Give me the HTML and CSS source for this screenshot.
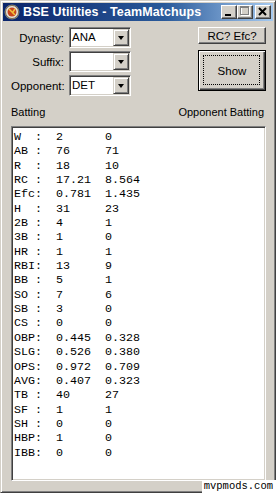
FILE: index.html
```html
<!DOCTYPE html>
<html lang="en">
<head>
    <meta charset="UTF-8">
    <meta name="viewport" content="width=device-width, initial-scale=1.0">
    <title>BSE Utilities - TeamMatchups</title>
    <link rel="stylesheet" href="styles.css">
</head>
<body>
    <div class="window">
        <div class="titlebar">
            <svg class="app-icon" width="16" height="16" viewBox="0 0 16 16">
                <circle cx="8" cy="8" r="7.5" fill="#8a8a8a"/>
                <circle cx="8" cy="8" r="6.5" fill="#e8e4dc"/>
                <circle cx="8" cy="8" r="4.5" fill="#c8461e"/>
                <path d="M5 5 L11 11 M11 5 L9 8" stroke="#f3c23c" stroke-width="1.5" fill="none"/>
                <circle cx="8" cy="8" r="6.5" fill="none" stroke="#6b5a3a" stroke-width="0.8"/>
            </svg>
            <span class="title">BSE Utilities - TeamMatchups</span>
            <div class="controls">
                <span class="ctl">
                    <svg width="14" height="12" viewBox="0 0 14 12"><rect x="3" y="8" width="6" height="2" fill="#000"/></svg>
                </span>
                <span class="ctl">
                    <svg width="14" height="12" viewBox="0 0 14 12">
                        <rect x="3.5" y="1.5" width="8" height="8" fill="none" stroke="#fff"/>
                        <rect x="2.5" y="0.5" width="8" height="8" fill="none" stroke="#808080"/>
                        <rect x="2" y="1" width="9" height="1" fill="#808080"/>
                    </svg>
                </span>
                <span class="ctl ctl-close">
                    <svg width="14" height="12" viewBox="0 0 14 12"><path d="M3 2 L10 9 M10 2 L3 9" stroke="#000" stroke-width="2" fill="none"/></svg>
                </span>
            </div>
        </div>

        <div class="content">
            <div class="top">
                <div class="fields">
                    <label>Dynasty:</label>
                    <div class="combo"><span class="combo-text">ANA</span><span class="combo-btn"></span></div>
                    <label>Suffix:</label>
                    <div class="combo"><span class="combo-text"></span><span class="combo-btn"></span></div>
                    <label>Opponent:</label>
                    <div class="combo"><span class="combo-text">DET</span><span class="combo-btn"></span></div>
                </div>
                <div class="actions">
                    <button class="btn btn-small">RC? Efc?</button>
                    <button class="btn btn-default">Show</button>
                </div>
            </div>

            <div class="captions">
                <span>Batting</span>
                <span>Opponent Batting</span>
            </div>

<pre class="stats">W  :  2      0
AB :  76     71
R  :  18     10
RC :  17.21  8.564
Efc:  0.781  1.435
H  :  31     23
2B :  4      1
3B :  1      0
HR :  1      1
RBI:  13     9
BB :  5      1
SO :  7      6
SB :  3      0
CS :  0      0
OBP:  0.445  0.328
SLG:  0.526  0.380
OPS:  0.972  0.709
AVG:  0.407  0.323
TB :  40     27
SF :  1      1
SH :  0      0
HBP:  1      0
IBB:  0      0</pre>
        </div>

        <div class="watermark">mvpmods.com</div>
    </div>
</body>
</html>
```

FILE: styles.css
```css
body {
    margin: 0;
    padding: 0;
    background-color: #d4d0c8;
    font-family: "Liberation Sans", Arial, sans-serif;
    font-size: 11px;
    color: #000;
}

.window {
    position: relative;
    width: 276px;
    height: 493px;
    box-sizing: border-box;
    padding: 3px;
    background-color: #d4d0c8;
    border: 1px solid;
    border-color: #d4d0c8 #404040 #404040 #d4d0c8;
    box-shadow: inset 1px 1px #fff, inset -1px -1px #808080;
    display: flex;
    flex-direction: column;
}

/* title bar */
.titlebar {
    height: 18px;
    margin: -1px -1px 0 -1px;
    display: flex;
    align-items: center;
    padding: 0 2px 0 1px;
    background: linear-gradient(to right, #0a246a, #2a5a9a 60%, #a6caf0);
}

.app-icon {
    flex: none;
    margin-right: 3px;
}

.title {
    color: #fff;
    font-weight: bold;
    font-size: 12.5px;
    letter-spacing: 0.1px;
    white-space: nowrap;
}

.controls {
    margin-left: auto;
    display: flex;
}

.ctl {
    width: 16px;
    height: 14px;
    box-sizing: border-box;
    background-color: #d4d0c8;
    border: 1px solid;
    border-color: #fff #404040 #404040 #fff;
    box-shadow: inset -1px -1px #808080;
    display: flex;
}

.ctl-close {
    margin-left: 2px;
}

/* form area */
.content {
    flex: 1;
    display: flex;
    flex-direction: column;
    padding: 6px 6px 8px 7px;
    min-height: 0;
}

.top {
    display: flex;
    justify-content: space-between;
}

.fields {
    display: grid;
    grid-template-columns: 53px 62px;
    grid-auto-rows: 21px;
    column-gap: 5px;
    row-gap: 3px;
    align-items: center;
    font-size: 11.5px;
}

.fields label {
    text-align: right;
}

.combo {
    height: 21px;
    box-sizing: border-box;
    display: flex;
    background-color: #fff;
    border: 1px solid;
    border-color: #808080 #fff #fff #808080;
    box-shadow: inset 1px 1px #404040, inset -1px -1px #d4d0c8;
    padding: 1px;
}

.combo-text {
    flex: 1;
    padding-left: 1px;
    line-height: 17px;
}

.combo-btn {
    position: relative;
    width: 16px;
    height: 17px;
    box-sizing: border-box;
    background-color: #d4d0c8;
    border: 1px solid;
    border-color: #d4d0c8 #404040 #404040 #d4d0c8;
    box-shadow: inset 1px 1px #fff, inset -1px -1px #808080;
}

.combo-btn::after {
    content: "";
    position: absolute;
    left: 4px;
    top: 6px;
    border-left: 3.5px solid transparent;
    border-right: 3.5px solid transparent;
    border-top: 4px solid #000;
}

.actions {
    width: 68px;
    display: flex;
    flex-direction: column;
    gap: 6px;
}

.btn {
    position: relative;
    font-family: "Liberation Sans", Arial, sans-serif;
    font-size: 11.5px;
    color: #000;
    background-color: #d4d0c8;
    border: 1px solid;
    border-color: #fff #404040 #404040 #fff;
    box-shadow: inset -1px -1px #808080;
    padding: 0;
}

.btn-small {
    height: 17px;
}

.btn-default {
    height: 41px;
    border-color: #000;
    box-shadow: inset 1px 1px #fff, inset -1px -1px #404040, inset -2px -2px #808080;
}

.btn-default::after {
    content: "";
    position: absolute;
    inset: 4px 5px 5px 4px;
    border: 1px dotted #000;
}

.captions {
    display: flex;
    justify-content: space-between;
    margin-top: 10px;
    padding-right: 2px;
    line-height: 13px;
}

.stats {
    flex: 1;
    margin: 7px 0 0 0;
    padding: 3px 2px 0 2px;
    background-color: #fff;
    border: 1px solid;
    border-color: #808080 #fff #fff #808080;
    box-shadow: inset 1px 1px #404040, inset -1px -1px #d4d0c8;
    font-family: "Liberation Mono", "Courier New", monospace;
    font-size: 11.67px;
    line-height: 14.35px;
    overflow: hidden;
}

.watermark {
    position: absolute;
    right: -1px;
    bottom: -1px;
    padding: 0 3px 0 2px;
    height: 13px;
    line-height: 13px;
    background-color: #fff;
    font-family: "Liberation Mono", "Courier New", monospace;
    font-size: 10.5px;
}
```
